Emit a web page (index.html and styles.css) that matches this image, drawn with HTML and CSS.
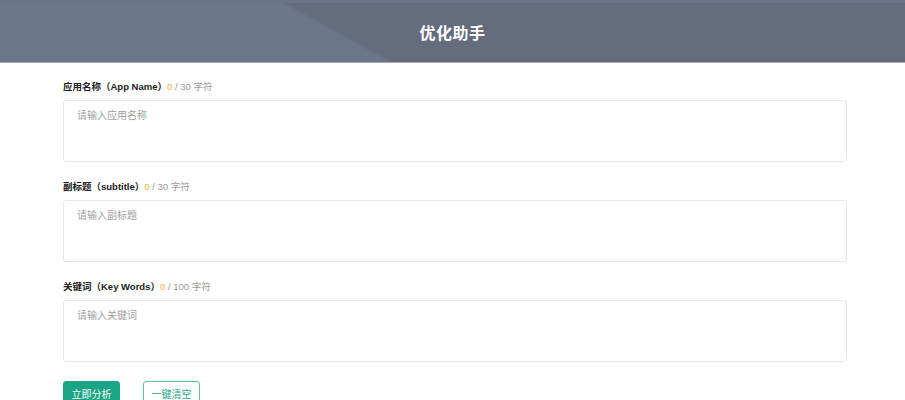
FILE: index.html
```html
<!DOCTYPE html>
<html lang="zh-CN">
<head>
<meta charset="utf-8">
<title>优化助手</title>
<link rel="stylesheet" href="styles.css">
</head>
<body>
<header class="header">
  <h1 class="title">优化助手</h1>
</header>
<main class="content">
  <section class="field">
    <div class="label"><b>应用名称（App Name）</b><span class="count">0</span><span class="limit"> / 30 字符</span></div>
    <textarea class="box" placeholder="请输入应用名称"></textarea>
  </section>
  <section class="field">
    <div class="label"><b>副标题（subtitle）</b><span class="count">0</span><span class="limit"> / 30 字符</span></div>
    <textarea class="box" placeholder="请输入副标题"></textarea>
  </section>
  <section class="field">
    <div class="label"><b>关键词（Key Words）</b><span class="count">0</span><span class="limit"> / 100 字符</span></div>
    <textarea class="box" placeholder="请输入关键词"></textarea>
  </section>
  <div class="actions">
    <button class="btn btn-primary">立即分析</button>
    <button class="btn btn-outline">一键清空</button>
  </div>
</main>
</body>
</html>
```
FILE: styles.css
```css
* { box-sizing: border-box; }
html, body { margin: 0; padding: 0; background: #fff; overflow: hidden; }
body {
  font-family: "Liberation Sans", Arial, "Noto Sans CJK SC", sans-serif;
  color: #333;
}
.header {
  height: 63px;
  border-top: 3px solid #6b7486;
  border-bottom: 1px solid #a3a9b4;
  background: linear-gradient(28.7deg, #6c7689 0, #6c7689 186px, #646c7e 190px, #646c7e 100%);
  display: flex;
  align-items: center;
  justify-content: center;
}
.title {
  margin: 0;
  color: #fff;
  font-family: "Noto Sans CJK SC", sans-serif;
  font-size: 16px;
  font-weight: 700;
  letter-spacing: 0.5px;
  padding-bottom: 2px;
}
.content {
  padding: 18px 58px 0 63px;
  width: 905px;
}
.field { margin-bottom: 19px; }
.label {
  font-size: 9.5px;
  line-height: 12px;
  margin-bottom: 7px;
}
.label b { font-weight: 700; color: #222; }
.count { color: #f0b43a; }
.limit { color: #9a9a9a; }
.box {
  display: block;
  width: 784px;
  height: 62px;
  border: 1px solid #e6e6e6;
  border-radius: 3px;
  padding: 8px 13px;
  resize: none;
  font-family: "Liberation Sans", Arial, "Noto Sans CJK SC", sans-serif;
  font-size: 10px;
  line-height: 14px;
  outline: none;
  background: #fff;
}
.box::placeholder { color: #a0a0a0; }
.actions {
  display: flex;
  gap: 23px;
}
.btn {
  width: 57px;
  height: 24px;
  border-radius: 3px;
  font-family: "Noto Sans CJK SC", sans-serif;
  font-size: 10px;
  padding: 0;
  cursor: pointer;
}
.btn-primary {
  background: #1aa584;
  border: 1px solid #1aa584;
  color: #fff;
}
.btn-outline {
  background: #fff;
  border: 1px solid #5fc0a7;
  color: #1aa584;
}
```
